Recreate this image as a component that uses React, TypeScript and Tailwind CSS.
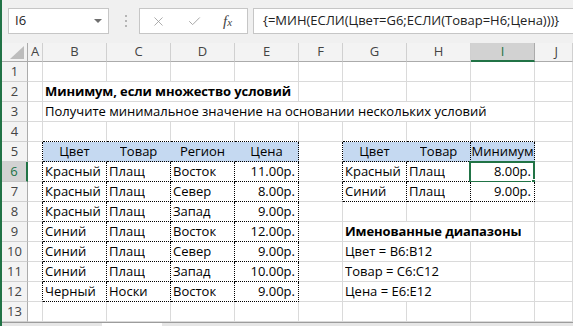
import React from 'react';
import { X, Check } from 'lucide-react';

type CellDef = {
  c: number;
  span?: number;
  text: string;
  align?: 'left' | 'center' | 'right';
  bold?: boolean;
};

const COLS = ['A', 'B', 'C', 'D', 'E', 'F', 'G', 'H', 'I', 'J'];

const SPAN: Record<number, string> = {
  1: '',
  2: 'col-span-2',
  3: 'col-span-3',
  4: 'col-span-4',
  8: 'col-span-8',
};

const ALIGN = {
  left: 'justify-start pl-[2px]',
  center: 'justify-center',
  right: 'justify-end pr-[3px]',
};

// B5:E12 and G5:I7 have dotted borders
const inTable = (c: number, r: number) =>
  (c >= 1 && c <= 4 && r >= 5 && r <= 12) || (c >= 6 && c <= 8 && r >= 5 && r <= 7);
const headerInside = (c: number, r: number) => r === 5 && ((c >= 1 && c <= 3) || c === 6);
const isFilled = (c: number, r: number) => r === 5 && ((c >= 1 && c <= 4) || (c >= 6 && c <= 8));

const data: Record<number, CellDef[]> = {
  2: [{ c: 1, span: 4, text: 'Минимум, если множество условий', bold: true }],
  3: [{ c: 1, span: 8, text: 'Получите минимальное значение на основании нескольких условий' }],
  5: [
    { c: 1, text: 'Цвет', align: 'center' },
    { c: 2, text: 'Товар', align: 'center' },
    { c: 3, text: 'Регион', align: 'center' },
    { c: 4, text: 'Цена', align: 'center' },
    { c: 6, text: 'Цвет', align: 'center' },
    { c: 7, text: 'Товар', align: 'center' },
    { c: 8, text: 'Минимум', align: 'center' },
  ],
  6: [
    { c: 1, text: 'Красный' },
    { c: 2, text: 'Плащ' },
    { c: 3, text: 'Восток' },
    { c: 4, text: '11.00р.', align: 'right' },
    { c: 6, text: 'Красный' },
    { c: 7, text: 'Плащ' },
    { c: 8, text: '8.00р.', align: 'right' },
  ],
  7: [
    { c: 1, text: 'Красный' },
    { c: 2, text: 'Плащ' },
    { c: 3, text: 'Север' },
    { c: 4, text: '8.00р.', align: 'right' },
    { c: 6, text: 'Синий' },
    { c: 7, text: 'Плащ' },
    { c: 8, text: '9.00р.', align: 'right' },
  ],
  8: [
    { c: 1, text: 'Красный' },
    { c: 2, text: 'Плащ' },
    { c: 3, text: 'Запад' },
    { c: 4, text: '9.00р.', align: 'right' },
  ],
  9: [
    { c: 1, text: 'Синий' },
    { c: 2, text: 'Плащ' },
    { c: 3, text: 'Восток' },
    { c: 4, text: '12.00р.', align: 'right' },
    { c: 6, span: 3, text: 'Именованные диапазоны', bold: true },
  ],
  10: [
    { c: 1, text: 'Синий' },
    { c: 2, text: 'Плащ' },
    { c: 3, text: 'Север' },
    { c: 4, text: '9.00р.', align: 'right' },
    { c: 6, span: 2, text: 'Цвет = B6:B12' },
  ],
  11: [
    { c: 1, text: 'Синий' },
    { c: 2, text: 'Плащ' },
    { c: 3, text: 'Запад' },
    { c: 4, text: '10.00р.', align: 'right' },
    { c: 6, span: 2, text: 'Товар = C6:C12' },
  ],
  12: [
    { c: 1, text: 'Черный' },
    { c: 2, text: 'Носки' },
    { c: 3, text: 'Восток' },
    { c: 4, text: '9.00р.', align: 'right' },
    { c: 6, span: 2, text: 'Цена = E6:E12' },
  ],
};

function rowCells(r: number): CellDef[] {
  const defs = data[r] ?? [];
  const out: CellDef[] = [];
  let c = 0;
  while (c < COLS.length) {
    const d = defs.find((x) => x.c === c);
    if (d) {
      out.push(d);
      c += d.span ?? 1;
    } else {
      out.push({ c, text: '' });
      c += 1;
    }
  }
  return out;
}

function Cell({ r, def }: { r: number; def: CellDef }) {
  const span = def.span ?? 1;
  const end = def.c + span - 1;

  let right = 'border-r-[#dadada]';
  if (headerInside(end, r)) right = 'border-r-transparent';
  else if (inTable(end, r) || inTable(end + 1, r)) right = 'border-r-black [border-right-style:dotted]';

  let bottomDotted = false;
  for (let k = def.c; k <= end; k++) {
    if (inTable(k, r) || inTable(k, r + 1)) bottomDotted = true;
  }
  const bottom = bottomDotted ? 'border-b-black [border-bottom-style:dotted]' : 'border-b-[#dadada]';
  const bg = isFilled(def.c, r) ? 'bg-[#c5d9f1]' : 'bg-white';
  const selected = r === 6 && def.c === 8;

  return (
    <div
      className={`relative flex items-center border-r border-b ${right} ${bottom} ${bg} ${SPAN[span]} ${
        ALIGN[def.align ?? 'left']
      }`}
    >
      <span
        className={`whitespace-nowrap overflow-hidden leading-[19px] text-black ${
          def.bold ? 'font-bold text-[13px] tracking-[-0.1px]' : 'text-[13px]'
        }`}
      >
        {def.text}
      </span>
      {selected && (
        <>
          <div className="absolute -left-[2px] -top-[1px] -right-[1px] -bottom-[2px] border-2 border-[#217346]" />
          <div className="absolute -right-[4px] -bottom-[5px] w-[7px] h-[7px] bg-[#217346] border border-white" />
        </>
      )}
    </div>
  );
}

function FormulaBar() {
  return (
    <div className="h-[43px] flex items-start pt-[8px] bg-[#f0f0f0]">
      <div className="ml-[6px] w-[101px] h-[26px] bg-white border border-[#c6c6c6] flex items-center justify-between pl-[6px] pr-[6px]">
        <span className="text-[13px] text-[#222]">I6</span>
        <svg width="8" height="5" viewBox="0 0 8 5">
          <polygon points="0,0 8,0 4,4" fill="#6f6f6f" />
        </svg>
      </div>
      <div className="ml-[15px] w-[3px] h-[26px] flex flex-col items-center justify-center gap-[3px]">
        <div className="w-[2px] h-[2px] bg-[#b5b5b5]" />
        <div className="w-[2px] h-[2px] bg-[#b5b5b5]" />
        <div className="w-[2px] h-[2px] bg-[#b5b5b5]" />
      </div>
      <div className="ml-[12px] w-[109px] h-[26px] bg-white border border-[#c6c6c6] flex items-center">
        <X className="ml-[11px] w-[15px] h-[15px] text-[#9a9a9a]" strokeWidth={1.3} />
        <Check className="ml-[21px] w-[15px] h-[15px] text-[#a8a8a8]" strokeWidth={1.6} />
        <span className="ml-[21px] italic font-['Liberation_Serif',serif] text-[15px] leading-none text-[#444]">
          f<span className="text-[11px]">x</span>
        </span>
      </div>
      <div className="ml-[5px] flex-1 h-[26px] bg-white border border-r-0 border-[#c6c6c6] flex items-center pl-[9px]">
        <span className="text-[13px] text-[#222] whitespace-nowrap">{'{=МИН(ЕСЛИ(Цвет=G6;ЕСЛИ(Товар=H6;Цена)))}'}</span>
      </div>
    </div>
  );
}

export default function App() {
  const rows = Array.from({ length: 13 }, (_, i) => i + 1);
  return (
    <div className="w-[573px] h-[326px] overflow-hidden border-l-2 border-[#217346] bg-[#f0f0f0] font-['Open_Sans',sans-serif] flex flex-col">
      <FormulaBar />
      <div className="grid grid-cols-[26px_15px_64px_64px_64px_64px_44px_64px_64px_64px_1fr] grid-rows-[19px_repeat(13,20px)]">
        <div className="bg-[#f3f3f3] border-r border-b border-[#ababab] flex items-end justify-end pr-[3px] pb-[2px]">
          <svg width="14" height="13" viewBox="0 0 14 13">
            <polygon points="14,0 14,13 0,13" fill="#bdbdbd" />
          </svg>
        </div>
        {COLS.map((col, i) =>
          col === 'I' ? (
            <div
              key={col}
              className="bg-[#d2d2d2] border-r border-r-[#ababab] border-b-2 border-b-[#217346] flex items-center justify-center text-[13px] text-[#217346]"
            >
              {col}
            </div>
          ) : (
            <div
              key={col}
              className={`bg-[#f3f3f3] border-b border-b-[#ababab] border-r border-r-[#d0d0d0] flex items-center justify-center text-[13px] text-[#444] ${
                i === COLS.length - 1 ? 'justify-end pr-[14px]' : ''
              }`}
            >
              {col}
            </div>
          )
        )}
        {rows.map((r) => (
          <React.Fragment key={r}>
            {r === 6 ? (
              <div className="bg-[#d2d2d2] border-r-2 border-r-[#217346] border-b border-b-[#c6c6c6] flex items-center justify-center text-[13px] text-[#217346]">
                {r}
              </div>
            ) : (
              <div className="bg-[#f3f3f3] border-r border-r-[#ababab] border-b border-b-[#d0d0d0] flex items-center justify-center text-[13px] text-[#444]">
                {r}
              </div>
            )}
            {rowCells(r).map((def) => (
              <Cell key={def.c} r={r} def={def} />
            ))}
          </React.Fragment>
        ))}
      </div>
      <div className="flex-1 border-t border-[#9c9c9c] bg-[#e6e6e6] flex">
        <div className="ml-[100px] w-[60px] bg-white" />
      </div>
    </div>
  );
}
